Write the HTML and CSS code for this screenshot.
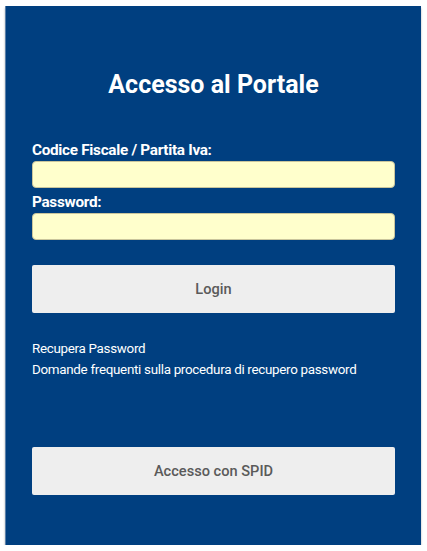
FILE: index.html
```html
<!DOCTYPE html>
<html lang="it">
<head>
<meta charset="utf-8">
<link rel="stylesheet" href="styles.css">
</head>
<body>
<div class="panel">
  <h1 class="title">Accesso al Portale</h1>
  <form class="form">
    <label class="label" for="cf">Codice Fiscale / Partita Iva:</label>
    <input class="field" id="cf" type="text">
    <label class="label" for="pw">Password:</label>
    <input class="field" id="pw" type="password">
    <button class="btn btn-login" type="button">Login</button>
  </form>
  <div class="links">
    <a class="link" href="#">Recupera Password</a>
    <a class="link" href="#">Domande frequenti sulla procedura di recupero password</a>
  </div>
  <button class="btn btn-spid" type="button">Accesso con SPID</button>
</div>
</body>
</html>
```
FILE: styles.css
```css
html, body { margin: 0; padding: 0; background: #ffffff; }
body { font-family: Roboto, "Liberation Sans", sans-serif; }
.panel {
  margin: 6px 6px 0 5px;
  height: 539px;
  box-sizing: border-box;
  background: #003f80;
  border-left: 1px solid #5a7fa8;
  padding: 0 26px 0 26px;
  box-shadow: 0 2px 2px rgba(0,0,0,0.3);
  display: flex;
  flex-direction: column;
}
.title {
  margin: 62px 0 0 0;
  font-size: 25px;
  line-height: 34px;
  font-weight: 700;
  color: #ffffff;
  text-align: center;
}
.form { display: flex; flex-direction: column; margin-top: 38px; }
.label {
  color: #ffffff;
  font-weight: 700;
  font-size: 15.3px;
  line-height: 20px;
  letter-spacing: -0.3px;
}
.field {
  height: 27px;
  box-sizing: border-box;
  margin: 1px 0 4px 0;
  border: 1px solid #c9c59c;
  border-radius: 4px;
  background: #ffffcc;
  padding: 0 6px;
}
.btn {
  height: 48px;
  box-sizing: border-box;
  border: none;
  border-radius: 2px;
  background: #eeeeee;
  color: #5a5a5a;
  font-family: Roboto, "Liberation Sans", sans-serif;
  font-size: 14.6px;
  font-weight: 500;
  width: 100%;
}
.btn-login { margin-top: 21px; }
.links { display: flex; flex-direction: column; margin-top: 25px; }
.link {
  color: #ffffff;
  text-decoration: none;
  font-size: 13.4px;
  line-height: 21px;
  letter-spacing: -0.3px;
}
.btn-spid { margin-top: 67px; }
```
